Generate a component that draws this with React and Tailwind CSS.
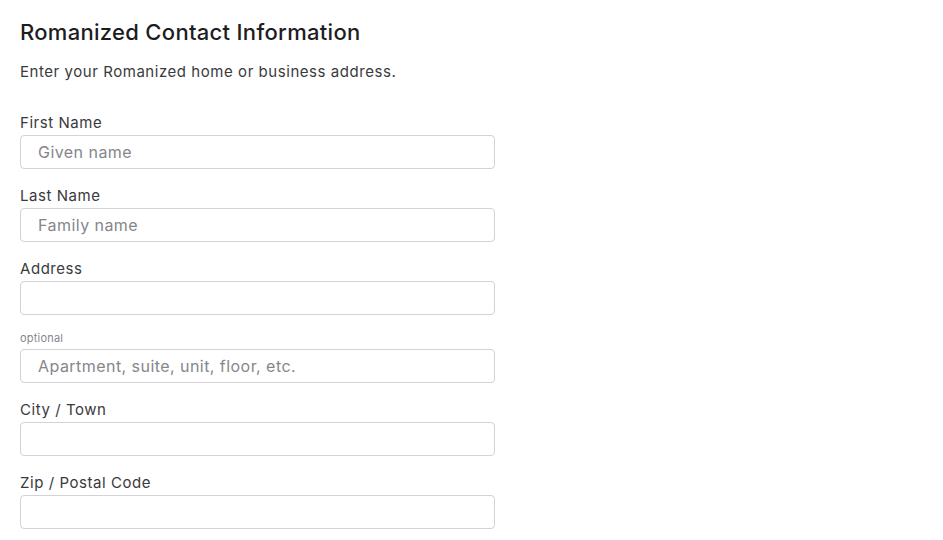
import React from "react";

const fields = [
  { label: "First Name", placeholder: "Given name" },
  { label: "Last Name", placeholder: "Family name" },
  { label: "Address", placeholder: "" },
  { label: "optional", placeholder: "Apartment, suite, unit, floor, etc.", small: true },
  { label: "City / Town", placeholder: "" },
  { label: "Zip / Postal Code", placeholder: "" },
];

const App = () => {
  return (
    <div className="min-h-screen bg-white font-['Inter',sans-serif] text-[#333336] pl-5 pt-[18px]">
      <div className="w-[475px]">
        {/* Header */}
        <h1 className="text-[22px] leading-[28px] font-medium text-[#1d1d1f] tracking-[0.3px]">
          Romanized Contact Information
        </h1>
        <p className="mt-[16px] text-[15px] leading-[20px] text-[#3a3a3c] tracking-[0.55px]">
          Enter your Romanized home or business address.
        </p>

        {/* Fields */}
        <div className="mt-[30px] flex flex-col gap-4">
          {fields.map((f, i) => (
            <div key={i} className="flex flex-col">
              {f.small ? (
                <label className="text-[11px] leading-[14px] text-[#86868b] tracking-[0.2px] mb-1">
                  {f.label}
                </label>
              ) : (
                <label className="text-[15px] leading-[21px] text-[#3a3a3c] tracking-[0.55px] mb-[2px]">
                  {f.label}
                </label>
              )}
              <input
                type="text"
                placeholder={f.placeholder}
                className="h-[34px] w-full rounded-[4px] border border-[#d2d2d7] bg-white px-[17px] text-[16px] tracking-[0.45px] text-[#1d1d1f] placeholder:text-[#86868b] outline-none"
              />
            </div>
          ))}
        </div>
      </div>
    </div>
  );
};

export default App;
